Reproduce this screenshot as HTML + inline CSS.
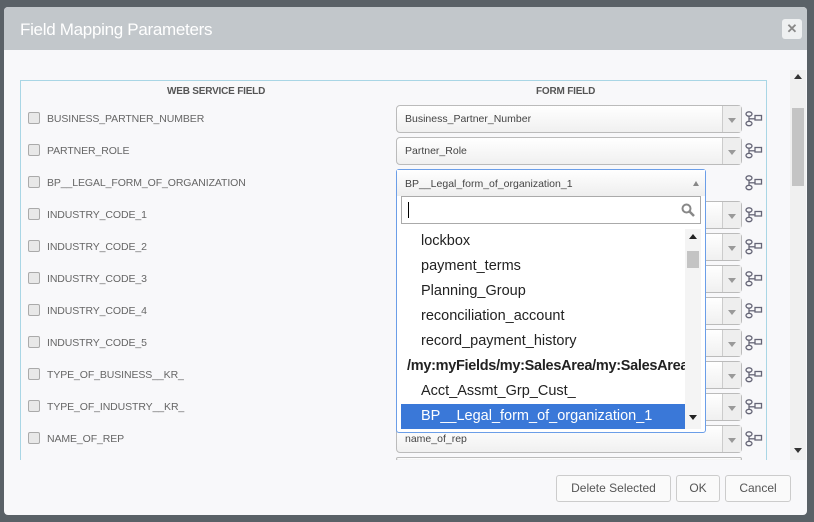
<!DOCTYPE html><html><head><style>
*{box-sizing:border-box;margin:0;padding:0}
body{width:814px;height:522px;background:#5a6167;font-family:"Liberation Sans",sans-serif;position:relative;overflow:hidden}
.m{position:absolute;left:4px;top:7px;width:803px;height:508px;background:#f8f8fa;border-radius:4px;overflow:hidden}
.h{height:43px;background:#c2c7cb;color:#fff;font-size:17px;padding:13px 0 0 16px;letter-spacing:-0.3px}
.x{position:absolute;left:778px;top:12px;width:20px;height:20px;background:#eef0f1;border-radius:3px;color:#888;font-size:13px;font-weight:bold;text-align:center;line-height:20px}
.sa{position:absolute;left:0;top:63px;width:786px;height:390px;overflow:hidden}
.fr{position:absolute;left:16px;top:10px;width:747px;height:400px;border-left:1px solid #a9d6e5;border-top:1px solid #a9d6e5;border-right:1px solid #a9d6e5}
.hd{position:absolute;top:16px;font-size:10px;font-weight:bold;color:#555;letter-spacing:-0.2px}
.cb{position:absolute;left:24px;width:12px;height:12px;border:1px solid #aaa;border-radius:2px;background:#e8e8e8}
.lb{position:absolute;left:43px;font-size:10.5px;color:#666;letter-spacing:-0.1px}
.sel{position:absolute;left:392px;width:346px;height:28px;border:1px solid #bbb;border-radius:4px;background:linear-gradient(#fff,#f0f0f0);font-size:10.5px;color:#444;padding:7px 8px}
.sel.a:after{content:"";position:absolute;right:0;top:0;width:18px;height:26px;border-left:1px solid #ccc;background:#eee}
.sel i{position:absolute;right:5px;top:12px;width:0;height:0;border-left:4px solid transparent;border-right:4px solid transparent;border-top:5px solid #999;z-index:2}
.ic{position:absolute;left:741px;width:18px;height:16px}
.sb{position:absolute;left:786px;top:63px;width:16px;height:390px;background:#f0f0f0}
.dd{position:absolute;left:396px;top:169px;width:310px;height:264px;border:1px solid #6b9ee8;border-radius:3px;background:#fff}
.dd .t{height:26px;background:linear-gradient(#fff,#eee);font-size:10.5px;color:#444;padding:8px 8px}
.srch{position:absolute;left:4px;top:26px;width:300px;height:28px;border:1px solid #aaa;background:#fff}
.it{position:absolute;left:4px;width:284px;height:25px;font-size:14.5px;color:#222;padding:4px 0 0 20px;white-space:nowrap;overflow:hidden}
.btn{position:absolute;top:475px;height:27px;border:1px solid #ccc;border-radius:3px;background:#fafafa;font-size:12px;color:#555;text-align:center;line-height:25px}
</style></head><body>
<div class="m">
<div class="h">Field Mapping Parameters</div>
<div class="x">✕</div>
<div class="sa">
<div class="fr"></div>
<div class="hd" style="left:163px">WEB SERVICE FIELD</div>
<div class="hd" style="left:532px">FORM FIELD</div>
</div>
<div class="sb"><div style="position:absolute;left:4px;top:4px;border-left:4px solid transparent;border-right:4px solid transparent;border-bottom:5px solid #333"></div><div style="position:absolute;left:2px;top:38px;width:12px;height:78px;background:#c4c4c4"></div><div style="position:absolute;left:4px;top:378px;border-left:4px solid transparent;border-right:4px solid transparent;border-top:5px solid #333"></div></div>
</div>
<div id="rows"></div>
<div class="dd">
<div class="t">BP__Legal_form_of_organization_1<span style="position:absolute;right:6px;top:11px;border-left:3px solid transparent;border-right:3px solid transparent;border-bottom:5px solid #888"></span></div>
<div class="srch"><div style="position:absolute;left:6px;top:5px;width:1px;height:16px;background:#000"></div>
<svg style="position:absolute;right:5px;top:6px" width="14" height="14"><circle cx="5.5" cy="5.5" r="4" fill="none" stroke="#888" stroke-width="2"/><line x1="8.5" y1="8.5" x2="13" y2="13" stroke="#888" stroke-width="2.5"/></svg></div>
<div class="it" style="top:59px">lockbox</div>
<div class="it" style="top:84px">payment_terms</div>
<div class="it" style="top:109px">Planning_Group</div>
<div class="it" style="top:134px">reconciliation_account</div>
<div class="it" style="top:159px">record_payment_history</div>
<div class="it" style="top:184px;padding-left:6px;font-weight:bold;letter-spacing:-0.3px">/my:myFields/my:SalesArea/my:SalesArea</div>
<div class="it" style="top:209px">Acct_Assmt_Grp_Cust_</div>
<div class="it" style="top:234px;background:#3a78d8;color:#fff">BP__Legal_form_of_organization_1</div>
<div style="position:absolute;left:288px;top:59px;width:16px;height:200px;background:#f4f4f4"><div style="position:absolute;left:4px;top:5px;border-left:4px solid transparent;border-right:4px solid transparent;border-bottom:5px solid #222"></div><div style="position:absolute;left:2px;top:22px;width:12px;height:17px;background:#c4c4c4"></div><div style="position:absolute;left:4px;top:186px;border-left:4px solid transparent;border-right:4px solid transparent;border-top:5px solid #222"></div></div>
</div>
<div class="btn" style="left:556px;width:115px">Delete Selected</div>
<div class="btn" style="left:676px;width:44px">OK</div>
<div class="btn" style="left:725px;width:66px">Cancel</div>
<script>
var L=["BUSINESS_PARTNER_NUMBER","PARTNER_ROLE","BP__LEGAL_FORM_OF_ORGANIZATION","INDUSTRY_CODE_1","INDUSTRY_CODE_2","INDUSTRY_CODE_3","INDUSTRY_CODE_4","INDUSTRY_CODE_5","TYPE_OF_BUSINESS__KR_","TYPE_OF_INDUSTRY__KR_","NAME_OF_REP"];
var S=["Business_Partner_Number","Partner_Role","","","","","","","","","name_of_rep"];
var h="";
for(var i=0;i<12;i++){var c=119+32*i;
if(i<11){h+='<div class="cb" style="top:'+(c-7)+'px;left:28px"></div><div class="lb" style="left:47px;top:'+(c-6)+'px">'+L[i]+'</div>';
h+='<svg class="ic" style="left:745px;top:'+(c-8)+'px" viewBox="0 0 18 16" fill="none" stroke="#667" stroke-width="1.3"><ellipse cx="4" cy="3" rx="3" ry="2.2"/><ellipse cx="4" cy="12.5" rx="3" ry="2.2"/><line x1="4" y1="5" x2="4" y2="10.3"/><line x1="4" y1="7.8" x2="10" y2="7.8"/><rect x="10" y="4.5" width="6.5" height="4.5"/></svg>';}
if(i!=2){h+='<div class="sel'+(i<11?' a':'')+'" style="left:396px;top:'+(c-14)+'px;'+(i==11?'height:4px;padding:0;':'')+'">'+(S[i]||"")+(i<11?'<i></i>':'')+'</div>';}}
document.getElementById("rows").innerHTML=h;
</script>
<div style="position:absolute;left:396px;top:460px;width:346px;height:12px;background:#f8f8fa"></div>
</body></html>
